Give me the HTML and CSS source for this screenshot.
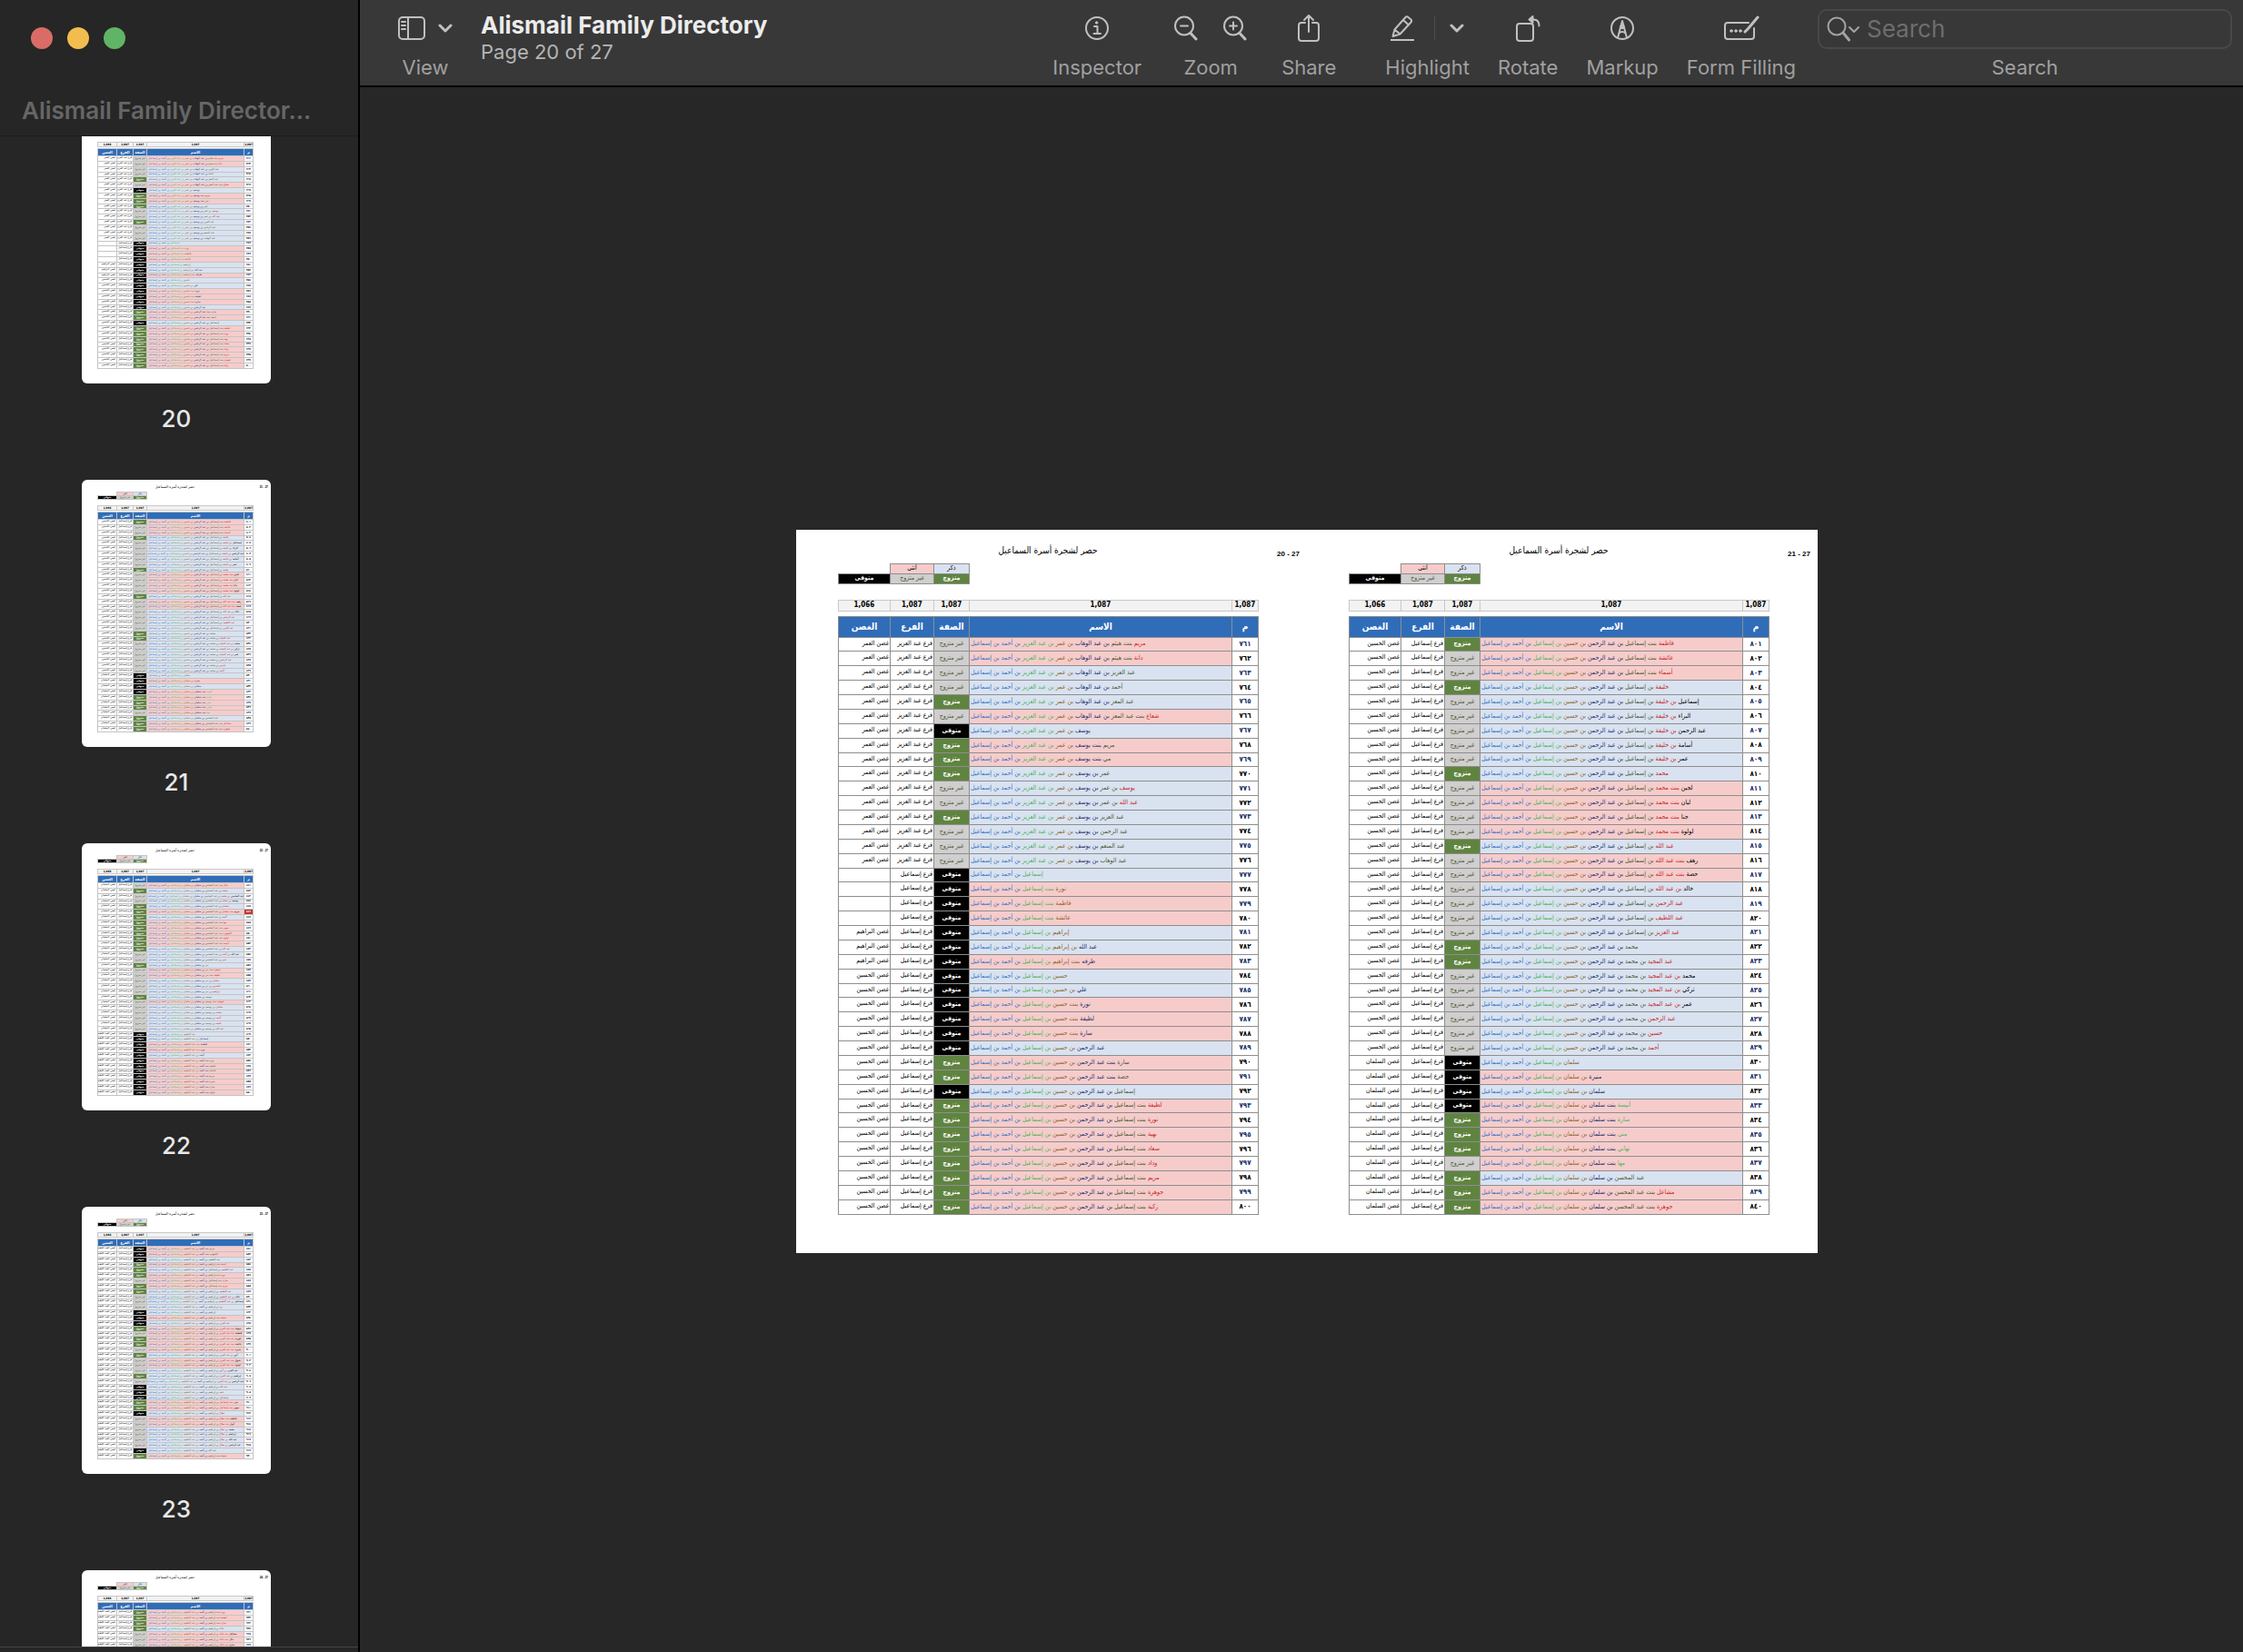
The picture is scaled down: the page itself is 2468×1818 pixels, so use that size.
FILE: index.html
```html
<!DOCTYPE html>
<html lang="en">
<head>
<meta charset="utf-8">
<title>Alismail Family Directory</title>
<link rel="stylesheet" href="styles.css">
</head>
<body>
<div class="window">
  <aside class="sidebar">
    <div class="sidebar-head">
      <div class="lights">
        <button class="light light-close" aria-label="Close"></button>
        <button class="light light-min" aria-label="Minimise"></button>
        <button class="light light-full" aria-label="Full screen"></button>
      </div>
      <h2 class="sidebar-title">Alismail Family Director...</h2>
    </div>
    <div class="thumbs" id="thumbs"></div>
    <div class="sidebar-foot"></div>
  </aside>
  <main class="main">
    <header class="toolbar">
      <button class="tool tool-view">
        <span class="tool-icons">
          <svg width="30" height="26" viewBox="0 0 30 26" class="ico"><rect x="1" y="1" width="28" height="24" rx="4"/><path d="M11 1v24M4 6h4M4 10h4M4 14h4"/></svg>
          <svg width="16" height="10" viewBox="0 0 16 10" class="ico ico-bold"><path d="M2 2l6 6 6-6"/></svg>
        </span>
        <span class="tool-label">View</span>
      </button>
      <div class="doc-title">
        <h1>Alismail Family Directory</h1>
        <p>Page 20 of 27</p>
      </div>
      <div class="tools">
        <button class="tool">
          <span class="tool-icons"><svg width="28" height="28" viewBox="0 0 28 28" class="ico"><circle cx="14" cy="14" r="12"/><path d="M11 12h3.500v8M10.500 20h7.500" /><circle cx="13.600" cy="8" r="1.200" class="dot"/></svg></span>
          <span class="tool-label">Inspector</span>
        </button>
        <div class="tool tool-zoom" role="group" aria-label="Zoom">
          <span class="tool-icons tool-icons-wide">
            <button class="bare" aria-label="Zoom out"><svg width="26" height="28" viewBox="0 0 26 28" class="ico"><circle cx="11" cy="11.500" r="10"/><path d="M7 11.500h8"/><path d="M18 19.500l6 6.500" class="thick"/></svg></button>
            <button class="bare" aria-label="Zoom in"><svg width="26" height="28" viewBox="0 0 26 28" class="ico"><circle cx="11" cy="11.500" r="10"/><path d="M7 11.500h8M11 7.500v8"/><path d="M18 19.500l6 6.500" class="thick"/></svg></button>
          </span>
          <span class="tool-label">Zoom</span>
        </div>
        <button class="tool">
          <span class="tool-icons"><svg width="24" height="32" viewBox="0 0 24 32" class="ico"><path d="M8 10H4a3 3 0 0 0-3 3v14a3 3 0 0 0 3 3h16a3 3 0 0 0 3-3V13a3 3 0 0 0-3-3h-4M12 20V2M7 7l5-5 5 5"/></svg></span>
          <span class="tool-label">Share</span>
        </button>
        <button class="tool tool-highlight">
          <span class="tool-icons tool-icons-split">
            <svg width="26" height="30" viewBox="0 0 26 30" class="ico"><path d="M2.500 24l2-7.500L16.500 3a2 2 0 0 1 3 0l3 2.500a2 2 0 0 1 0 3L10.500 21.500zM14 6l6 5.500M4.500 16.500l6 5" /><path d="M0 28h26"/></svg>
            <span class="split"></span>
            <svg width="16" height="10" viewBox="0 0 16 10" class="ico ico-bold"><path d="M2 2l6 6 6-6"/></svg>
          </span>
          <span class="tool-label">Highlight</span>
        </button>
        <button class="tool">
          <span class="tool-icons"><svg width="28" height="32" viewBox="0 0 28 32" class="ico"><rect x="2" y="11" width="18" height="19" rx="3"/><path d="M17 6.500h3.500c3.500 0 6 2.500 6 7"/><path d="M19.500 3v7l-4-3.500z" class="fill"/></svg></span>
          <span class="tool-label">Rotate</span>
        </button>
        <button class="tool">
          <span class="tool-icons"><svg width="28" height="28" viewBox="0 0 28 28" class="ico"><circle cx="14" cy="14" r="12"/><path d="M9 24.500l3.500-13M19 24.500l-3.500-13M10.500 19.500q3.500-3 7 0"/><path d="M14 6l2.200 8h-4.400z" class="fill"/></svg></span>
          <span class="tool-label">Markup</span>
        </button>
        <button class="tool">
          <span class="tool-icons"><svg width="40" height="30" viewBox="0 0 40 30" class="ico"><path d="M28 9H5a3 3 0 0 0-3 3v12a3 3 0 0 0 3 3h26a3 3 0 0 0 3-3V15"/><path d="M38 3L27.500 15.500l-3.500 3.500" class="thick"/><circle cx="9" cy="18" r="1.300" class="dot"/><circle cx="14" cy="18" r="1.300" class="dot"/><circle cx="19" cy="18" r="1.300" class="dot"/></svg></span>
          <span class="tool-label">Form Filling</span>
        </button>
        <div class="search">
          <div class="search-box">
            <svg width="36" height="28" viewBox="0 0 36 28" class="ico ico-search"><circle cx="11" cy="11" r="9.500"/><path d="M18 18l6.500 8" class="thick"/><path d="M25 12l5 5 5-5"/></svg>
            <input id="search" type="text" placeholder="Search">
          </div>
          <label class="tool-label" for="search">Search</label>
        </div>
      </div>
    </header>
    <div class="canvas">
      <div class="spread" id="spread"></div>
    </div>
  </main>
</div>
<script src="script.js"></script>
</body>
</html>
```
FILE: styles.css
```css
* { box-sizing: border-box; }
body { margin: 0; background: #272727; color: #e8e8e8; font-family: Inter, "Liberation Sans", sans-serif; }
button { font: inherit; color: inherit; background: none; border: 0; padding: 0; }
h1, h2, h3, p { margin: 0; }

.window { display: grid; grid-template-columns: 396px 1fr; height: 100vh; overflow: hidden; }

/* Sidebar */
.sidebar { display: flex; flex-direction: column; min-height: 0; background: #262626; border-right: 2px solid #000; }
.sidebar-head { height: 150px; flex: none; padding: 30px 24px 0; border-bottom: 1px solid #1c1c1c; }
.lights { display: flex; gap: 16px; padding-left: 10px; }
.light { width: 24px; height: 24px; border-radius: 50%; }
.light-close { background: #d96c66; }
.light-min { background: #f3bc4f; }
.light-full { background: #5fb565; }
.sidebar-title { margin-top: 52px; font-size: 26px; line-height: 32px; font-weight: 600; color: #666; white-space: nowrap; }
.thumbs { flex: 1; min-height: 0; overflow: hidden; display: flex; flex-direction: column; align-items: center; padding-right: 6px; }
.thumb { flex: none; height: 400px; margin: 0; }
.thumb:first-child { margin-top: -22px; }
.thumb figcaption { margin-top: 22px; text-align: center; font-size: 26px; line-height: 34px; font-weight: 500; }
.sidebar-foot { height: 6px; flex: none; border-top: 1px solid #444; }

/* Toolbar */
.main { display: flex; flex-direction: column; min-width: 0; min-height: 0; }
.toolbar { flex: none; height: 96px; display: flex; background: #383838; border-bottom: 2px solid #000; padding: 0 12px 0 42px; color: #a3a3a3; }
.tool { display: flex; flex-direction: column; align-items: center; }
.tool-icons { height: 62px; display: flex; align-items: center; justify-content: center; gap: 14px; }
.tool-icons-wide { gap: 28px; }
.tool-icons-split { gap: 16px; }
.tool-label { font-size: 22px; line-height: 24px; white-space: nowrap; color: #a0a0a0; }
.split { width: 1px; height: 28px; background: #4c4c4c; margin: 0 0 0 6px; }
.bare { display: flex; }
.ico { display: block; fill: none; stroke: #c0c0c0; stroke-width: 2; stroke-linecap: round; stroke-linejoin: round; }
.ico-bold { stroke-width: 3; }
.ico .thick { stroke-width: 3; }
.ico .dot, .ico .fill { fill: #c0c0c0; }
.ico .dot { stroke-width: 1; }
.doc-title { margin-left: 31px; padding-top: 12px; white-space: nowrap; }
.doc-title h1 { font-size: 26px; line-height: 32px; font-weight: 700; color: #ececec; }
.doc-title p { font-size: 22px; line-height: 26px; color: #b4b4b4; }
.tools { margin-left: auto; display: flex; gap: 31px; }
.tool-zoom { margin: 0 7px 0 5px; }
.tool-highlight { margin-left: 23px; }
.search { width: 456px; margin-left: -7px; padding-top: 10px; text-align: center; }
.search-box { height: 44px; margin-bottom: 8px; display: flex; align-items: center; gap: 8px; padding: 0 8px; border: 2px solid #484846; border-radius: 10px; }
.ico-search { flex: none; stroke: #a3a3a3; }
.search input { flex: 1; min-width: 0; border: 0; padding: 0; background: none; outline: 0; color: #ddd; font: 26px/32px Inter, "Liberation Sans", sans-serif; }
.search input::placeholder { color: #6e6e6e; opacity: 1; }

/* Document spread */
.canvas { flex: 1; min-height: 0; display: flex; align-items: center; justify-content: center; padding: 47px 0 0 12px; }
.spread { display: flex; background: #fff; }

.sheet {
  --w: 562px; --h: 796px; --pad: 0 53px 0 46px;
  --top: 14px; --head: 23px; --legend: 11px; --legend-gap: 17px; --count: 12px; --count-gap: 5px;
  --table: 659px; --th: 23px;
  --c1: 57px; --c2: 48px; --c3: 39px; --c5: 29px; --edge: 8px;
  --text: 7px; --figure: 8px; --title: 10px; --thead: 10px; --line: #8e8e8e; --inset: 3px;
  width: var(--w); height: var(--h); padding-top: var(--top); overflow: hidden;
  background: #fff; color: #000; font-family: "DejaVu Sans Condensed", "DejaVu Sans", sans-serif; font-size: var(--text);
}
.sheet-thumb {
  --w: 208px; --h: 294px; --pad: 0 19px 0 17px;
  --top: 4px; --head: 9px; --legend: 4px; --legend-gap: 6px; --count: 5px; --count-gap: 1px;
  --table: 243px; --th: 8px;
  --c1: 21px; --c2: 18px; --c3: 15px; --c5: 10px; --edge: 3px;
  --text: 3px; --figure: 3px; --title: 4px; --thead: 4px; --line: #c4c4c4; --inset: 0;
  border-radius: 6px;
}
.sheet-head { height: var(--head); display: grid; grid-template-columns: 1fr auto 1fr; padding-right: var(--edge); line-height: 1; }
.sheet-title { grid-column: 2; font-size: var(--title); font-weight: 400; line-height: 18px; }
.sheet-thumb .sheet-title { line-height: 8px; }
.sheet-no { text-align: right; align-self: center; padding-top: 4px; font-family: "Liberation Sans", sans-serif; font-size: var(--figure); font-weight: 700; }
.sheet-thumb .sheet-no { padding-top: 0; }
.sheet-body { padding: var(--pad); }
.grid { width: 100%; table-layout: fixed; border-collapse: collapse; direction: rtl; }
.grid td, .grid th { padding: 0; border: 1px solid var(--line); line-height: 1; overflow: hidden; white-space: nowrap; text-align: center; font-weight: 400; }
.col-no { width: var(--c5); }
.col-state { width: var(--c3); }
.col-branch { width: var(--c2); }
.col-twig { width: var(--c1); }

.legend { margin-bottom: var(--legend-gap); }
.legend tr { height: var(--legend); }
.grid .void { border: 0; }
.counts { margin-bottom: var(--count-gap); }
.counts tr { height: var(--count); }
.grid .count { background: #f2f2f2; border-color: #c8c8c8; font-size: var(--figure); font-weight: 700; }
.people { height: var(--table); }
.people-part { height: auto; }
.people-part tbody tr { height: 6px; }
.people thead tr { height: var(--th); }
.people th { background: #2f6db9; color: #fff; font-size: var(--thead); font-weight: 700; }
.people .no { font-size: var(--figure); font-weight: 700; }
.people .no-odd { color: #1b2f6b; }
.people .no-flag { background: #c0392b; color: #fff; }
.people .name { text-align: left; padding-left: 1px; }
.people .side { text-align: right; vertical-align: top; padding: var(--inset) 1px 0; }
.sheet .male { background: #d9e2f0; }
.sheet .female { background: #f6cccb; }
.sheet .single { background: #d0cece; color: #4c5a3a; }
.sheet .married { background: #5f8440; color: #fff; font-weight: 700; }
.sheet .dead { background: #000; color: #fff; font-weight: 700; }
.gen0 { color: #3273c2; }
.gen1, .fresh { color: #4fb35c; }
.gen2 { color: #8a672b; }
.gen3 { color: #1b2f6b; }
.gen4 { color: #4a5a35; }
.gen5 { color: #c5271f; }
.gen6 { color: #000; }
```
FILE: script.js
```js
const lineage = {
  "-": [],
  U: ["عمر", "عبد العزيز"],
  W: ["عبد الوهاب", "عمر", "عبد العزيز"],
  Y: ["يوسف", "عمر", "عبد العزيز"],
  I: ["إسماعيل"],
  B: ["إبراهيم", "إسماعيل"],
  H: ["حسين", "إسماعيل"],
  R: ["عبد الرحمن", "حسين", "إسماعيل"],
  M: ["إسماعيل", "عبد الرحمن", "حسين", "إسماعيل"],
  K: ["محمد", "عبد الرحمن", "حسين", "إسماعيل"],
  S: ["سلمان", "إسماعيل"],
  T: ["سلمان", "سلمان", "إسماعيل"],
  C: ["عبد المحسن", "سلمان", "سلمان", "إسماعيل"],
  L: ["عبد اللطيف", "إسماعيل"],
  D: ["أحمد", "عبد اللطيف", "إسماعيل"],
  E: ["إبراهيم", "أحمد", "عبد اللطيف", "إسماعيل"]
};
const AZ = "فرع عبد العزيز", IS = "فرع إسماعيل";
const UM = "غصن العمر", BR = "غصن البراهيم", HU = "غصن الحسين", SA = "غصن السلمان", LA = "غصن العبد اللطيف";

// Each entry: sex, state, lineage, given name and any nearer ancestors.
const pages = {
  20: { first: 761, groups: [[16, AZ, UM], [4, IS, ""], [3, IS, BR], [17, IS, HU]], rows: `
f s W مريم/هيثم
f s W دانة/هيثم
m s W عبد العزيز
m s W أحمد
m m W عبد المعز
f s W شعاع/عبد المعز
m d U يوسف
f m Y مريم
f m Y مي
m m Y عمر
m s Y يوسف/عمر
m s Y عبد الله/عمر
m m Y عبد العزيز
m s Y عبد الرحمن
m s Y عبد المنعم
m s Y عبد الوهاب
m d - إسماعيل
f d I نورة
f d I فاطمة
f d I عائشة
m d I إبراهيم
m d B عبد الله
f d B طرفه
m d I حسين
m d H علي
f d H نورة
f d H لطيفة
f d H سارة
m d H عبد الرحمن
f m R سارة
f m R حصة
m d R إسماعيل
f m M لطيفة
f m M نورة
f m M بهية
f m M سعاد
f m M وداد
f m M مريم
f m M جوهرة
f m M زكية` },
  21: { first: 801, groups: [[29, IS, HU], [11, IS, SA]], rows: `
f m M فاطمة
f s M عائشة
f s M أسماء
m m M خليفة
m s M إسماعيل/خليفة
m s M البراء/خليفة
m s M عبد الرحمن/خليفة
m s M أسامة/خليفة
m s M عمر/خليفة
m m M محمد
f s M لجين/محمد
f s M ليان/محمد
f s M جنا/محمد
f s M لولوة/محمد
m m M عبد الله
f s M رهف/عبد الله
f s M حصة/عبد الله
m s M خالد/عبد الله
m s M عبد الرحمن
m s M عبد اللطيف
m s M عبد العزيز
m m R محمد
m m K عبد المجيد
m s K محمد/عبد المجيد
m s K تركي/عبد المجيد
m s K عمر/عبد المجيد
m s K عبد الرحمن
m s K حسين
m s K أحمد
m d I سلمان
x d S منيرة
m d S سلمان
F d T أنيسة
F m T سارة
F m T منى
F m T تهاني
F s T مها
m m T عبد المحسن
f m C مشاعل
f m C جوهرة` },
  22: { first: 841, flag: 846, groups: [[28, IS, SA], [12, IS, LA]], rows: `
f s C منال
m m C محمد
m s C عبد المحسن/محمد
m s C يوسف/محمد
m m C سلمان
f m C مريم/سلمان
m m C أحمد
f m C مها
f m C سهير
f m C الجوهرة
f m C لولوة
f m C أنيسة
m m C عبد الله
m s C عبد الله/أحمد
m s C عمر
m m T بدر
f s T جوهرة/بدر
f s T لطيفة/بدر
m s T سلمان/بدر
m s T الحسين/بدر
m s T إبراهيم/بدر
m m T يوسف
f s T جوهرة/يوسف
m s T سلمان/يوسف
m s T محمد/يوسف
m s T أحمد/يوسف
m s T خليفة/يوسف
m s T عبد الله/يوسف
m d I عبد اللطيف
m d L إسماعيل
f d L فاطمة
f d L نورة
m d L أحمد
f d D نورة
f d D لطيفة
f d D عائشة
f d D مريم
f d D منيرة
f d D سارة
f d D لولوة` },
  23: { first: 881, groups: [[40, IS, LA]], rows: `
f d D مريم
f d D الجوهرة
m d D عبد اللطيف
f m E أنيسة
m m D عبد اللطيف/إسماعيل
f m E نورة
f s D سارة/إسماعيل
f m D مريم/إسماعيل
m m E عبد اللطيف
m s E خالد/عبد اللطيف
m s E إسماعيل/عبد اللطيف
m s E زيد
m d D إبراهيم
f d E شيخة
m d E عبد العزيز
f m E سهيلة/عبد العزيز
f s E فاطمة/عبد العزيز
f m E فوزية/عبد العزيز
f m E عائشة/عبد العزيز
f s E منيرة/عبد العزيز
m m E أنور/عبد العزيز
f s E شوق/عبد العزيز
f s E لولوة/عبد العزيز
m s E عبد العزيز/أنور
m m E إبراهيم/عبد العزيز
m s E عبد الرحمن/عبد العزيز
m d E عبد الله
m d E حمد
m d E إسماعيل
f m E منى/إسماعيل
f m E سهير/إسماعيل
m d E صلاح
f s E فاطمة/صلاح
f s E أنوار/صلاح
m s E محمد/صلاح
m s E إبراهيم/صلاح
m s E عبد الله/صلاح
m s E عبد الرحمن/صلاح
m d D عبد الله
f m E شيخة` },
  24: { first: 921, part: true, groups: [[8, IS, LA]], rows: `
f m E نورة
f m E لطيفة
f m E سارة
m m E خالد
f s E مشاعل/خالد
f s E دلال/خالد
f s E سارة/خالد
m s E محمد/خالد` }
};

const states = { s: ["single", "غير متزوج"], m: ["married", "متزوج"], d: ["dead", "متوفى"] };
const arabic = n => String(n).replace(/\d/g, d => "٠١٢٣٤٥٦٧٨٩"[d]);

function fullName(sex, key, text) {
  const names = [...text.split("/"), ...lineage[key]];
  const parts = names.map((name, i) => {
    const link = i === 0 ? "" : i === 1 && /f/i.test(sex) ? "بنت " : "بن ";
    const tone = i === 0 && sex === "F" ? "fresh" : "gen" + Math.min(6, names.length - i);
    return `<span class="${tone}">${link}${name}</span>`;
  });
  return parts.join(" ") + ' <span class="gen0">بن أحمد بن إسماعيل</span>';
}

const cols = '<colgroup><col class="col-no"><col><col class="col-state"><col class="col-branch"><col class="col-twig"></colgroup>';

function sheet(no, extra) {
  const page = pages[no];
  const places = page.groups.flatMap(([n, a, b]) => Array(n).fill([a, b]));
  const body = page.rows.trim().split("\n").map((line, i) => {
    const [, sex, state, key, text] = line.match(/^(\S) (\S) (\S) (.+)$/);
    const id = page.first + i;
    const tone = id === page.flag ? " no-flag" : id % 2 ? " no-odd" : "";
    return `<tr><td class="no${tone}">${arabic(id)}</td><td class="name ${sex === "m" ? "male" : "female"}">${fullName(sex, key, text)}</td>` +
      `<td class="${states[state][0]}">${states[state][1]}</td><td class="side">${places[i][0]}</td><td class="side">${places[i][1]}</td></tr>`;
  }).join("");
  const counts = ["1,087", "1,087", "1,087", "1,087", "1,066"].map(n => `<td class="count">${n}</td>`).join("");
  return `<section class="sheet ${extra}">
    <div class="sheet-head"><h3 class="sheet-title" lang="ar" dir="rtl">حصر لشجرة أسرة السماعيل</h3><span class="sheet-no">${no} - 27</span></div>
    <div class="sheet-body" lang="ar">
      <table class="grid legend">${cols}
        <tr><td class="void"></td><td class="void"></td><td class="male">ذكر</td><td class="female">أنثى</td><td class="void"></td></tr>
        <tr><td class="void"></td><td class="void"></td><td class="married">متزوج</td><td class="single">غير متزوج</td><td class="dead">متوفى</td></tr>
      </table>
      <table class="grid counts">${cols}<tr>${counts}</tr></table>
      <table class="grid people${page.part ? " people-part" : ""}">${cols}
        <thead><tr><th>م</th><th>الاسم</th><th>الصفة</th><th>الفرع</th><th>الغصن</th></tr></thead>
        <tbody>${body}</tbody>
      </table>
    </div>
  </section>`;
}

document.getElementById("spread").innerHTML = sheet(20, "") + sheet(21, "");
document.getElementById("thumbs").innerHTML = [20, 21, 22, 23, 24]
  .map(no => `<figure class="thumb">${sheet(no, "sheet-thumb")}<figcaption>${no}</figcaption></figure>`).join("");
```
